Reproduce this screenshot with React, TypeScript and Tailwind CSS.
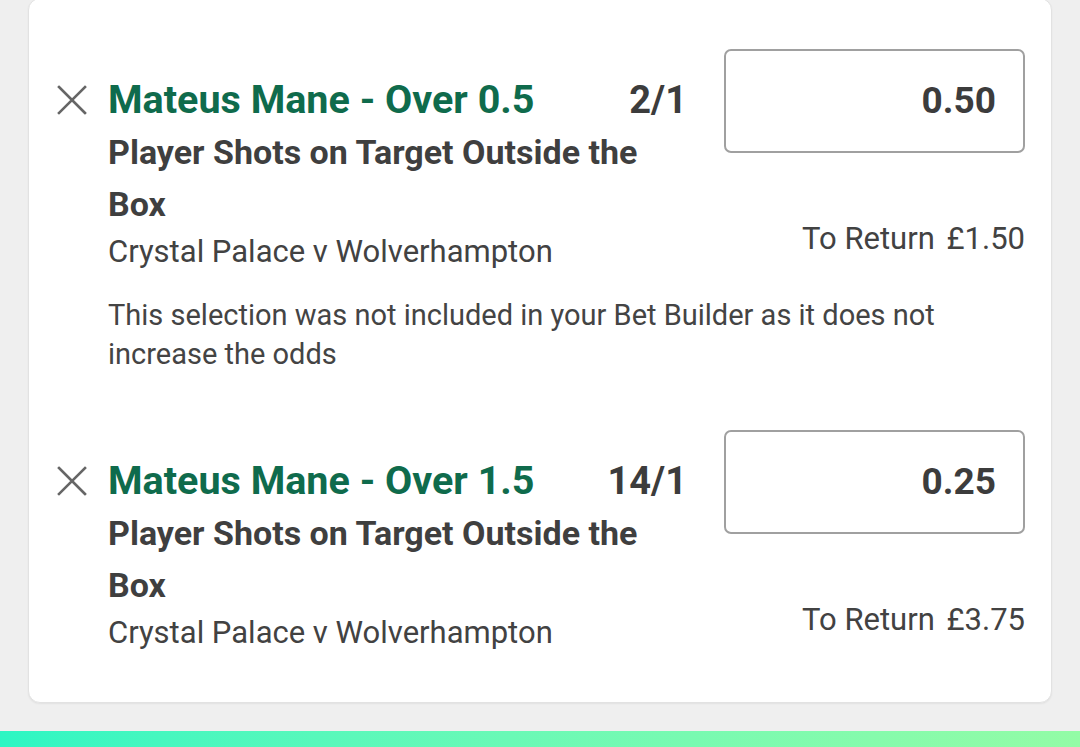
import React from "react";

type Selection = {
  title: string;
  odds: string;
  market: string;
  match: string;
  stake: string;
  toReturn: string;
  note?: string;
};

const selections: Selection[] = [
  {
    title: "Mateus Mane - Over 0.5",
    odds: "2/1",
    market: "Player Shots on Target Outside the Box",
    match: "Crystal Palace v Wolverhampton",
    stake: "0.50",
    toReturn: "£1.50",
    note: "This selection was not included in your Bet Builder as it does not increase the odds",
  },
  {
    title: "Mateus Mane - Over 1.5",
    odds: "14/1",
    market: "Player Shots on Target Outside the Box",
    match: "Crystal Palace v Wolverhampton",
    stake: "0.25",
    toReturn: "£3.75",
  },
];

function CloseIcon() {
  return (
    <svg width="30" height="30" viewBox="0 0 30 30" className="shrink-0">
      <path d="M2 2 L28 28 M28 2 L2 28" stroke="#666" strokeWidth="2.6" strokeLinecap="square" fill="none" />
    </svg>
  );
}

function SelectionRow({ s }: { s: Selection }) {
  return (
    <div className="flex flex-col">
      <div className="flex">
        <div className="flex flex-1 pt-[25px]">
          <div className="w-[79px] pl-[28px] h-[52px] flex items-center">
            <CloseIcon />
          </div>
          <div className="flex-1 min-w-0">
            <div className="flex items-center justify-between h-[52px] whitespace-nowrap">
              <span className="text-[39.5px] font-bold text-[#0f6b4c]">{s.title}</span>
              <span className="text-[38px] font-bold text-[#3c3c3c]">{s.odds}</span>
            </div>
            <p className="text-[34px] leading-[52px] font-bold text-[#3f3f3f] max-w-[580px]">{s.market}</p>
            <p className="text-[31px] leading-[44px] text-[#424242] whitespace-nowrap">{s.match}</p>
          </div>
        </div>
        <div className="w-[301px] ml-[37px] flex flex-col items-end">
          <div className="w-full h-[104px] border-2 border-[#a0a0a0] rounded-[7px] flex items-center justify-end pr-[27px]">
            <span className="text-[37px] font-bold text-[#3c3c3c]">{s.stake}</span>
          </div>
          <p className="mt-[66px] text-[31px] leading-[40px] text-[#424242] whitespace-nowrap">
            To Return <span className="ml-[4px]">{s.toReturn}</span>
          </p>
        </div>
      </div>
      {s.note && (
        <p className="ml-[79px] mt-[22px] text-[29px] leading-[39px] text-[#444] max-w-[850px]">{s.note}</p>
      )}
    </div>
  );
}

export default function App() {
  return (
    <div
      className="h-[747px] w-[1080px] bg-[#efefef] flex flex-col overflow-hidden"
      style={{ fontFamily: "Roboto, 'Liberation Sans', sans-serif" }}
    >
      <div className="mx-[28px] -mt-[2px] h-[705px] shrink-0 bg-white rounded-[12px] border border-[#e2e2e2] shadow-[0_1px_2px_rgba(0,0,0,0.06)] pt-[50px] pr-[26px]">
        <div className="flex flex-col gap-[56px]">
          {selections.map((s) => (
            <SelectionRow key={s.odds} s={s} />
          ))}
        </div>
      </div>
      <div className="mt-[28px] h-[16px] shrink-0 bg-gradient-to-r from-[#2cf6c3] to-[#93fca6]" />
    </div>
  );
}
